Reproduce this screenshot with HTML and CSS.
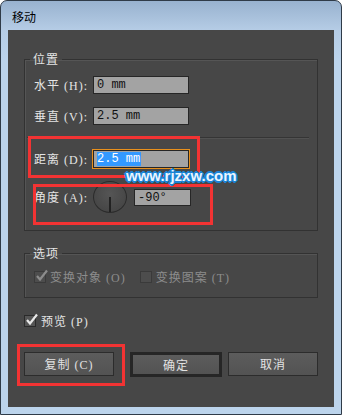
FILE: index.html
```html
<!DOCTYPE html>
<html lang="zh">

<head>
  <meta charset="UTF-8">
  <meta name="viewport" content="width=device-width, initial-scale=1.0">
  <title>移动</title>
  <link rel="stylesheet" href="styles.css">
</head>

<body>
  <div class="window">
    <div class="titlebar">移动</div>
    <div class="content">
      <fieldset class="group position">
        <legend>位置</legend>
        <div class="row first">
          <span class="label">水平 (H):</span>
          <span class="field">0 mm</span>
        </div>
        <div class="row">
          <span class="label">垂直 (V):</span>
          <span class="field">2.5 mm</span>
        </div>
        <div class="separator"></div>
        <div class="row distance">
          <span class="label">距离 (D):</span>
          <span class="field focused"><span class="selected">2.5 mm</span></span>
        </div>
        <div class="row angle">
          <span class="label">角度 (A):</span>
          <span class="dial"><span class="needle"></span></span>
          <span class="field small">-90°</span>
        </div>
      </fieldset>

      <fieldset class="group options">
        <legend>选项</legend>
        <div class="row checks">
          <span class="check disabled checked">
            <svg width="16" height="14" viewBox="0 0 16 14"><path d="M3 7 L6 10.5 L13 1.5" fill="none" stroke="#8c8c8c" stroke-width="2.2"/></svg>
          </span>
          <span class="check-label">变换对象 (O)</span>
          <span class="check disabled second"></span>
          <span class="check-label">变换图案 (T)</span>
        </div>
      </fieldset>

      <div class="preview">
        <span class="check checked">
          <svg width="16" height="14" viewBox="0 0 16 14"><path d="M3 7 L6 10.5 L13 1.5" fill="none" stroke="#e8e8e8" stroke-width="2.2"/></svg>
        </span>
        <span class="preview-label">预览 (P)</span>
      </div>

      <div class="buttons">
        <button class="btn copy">复制 (C)</button>
        <button class="btn ok">确定</button>
        <button class="btn cancel">取消</button>
      </div>
    </div>

    <!-- annotations laid over the dialog -->
    <div class="mark mark-distance"></div>
    <div class="mark mark-angle"></div>
    <div class="mark mark-copy"></div>
    <div class="watermark">www.rjzxw.com</div>
  </div>
</body>

</html>
```

FILE: styles.css
```css
* {
  box-sizing: border-box;
  margin: 0;
  padding: 0;
}

body {
  background: #ffffff;
  font-family: "Liberation Serif", "Noto Sans CJK SC", serif;
  font-size: 12px;
}

.window {
  position: relative;
  width: 342px;
  height: 415px;
  border: 1px solid #2f3b48;
  border-radius: 7px 7px 0 0;
  background: linear-gradient(#98b2cf 0px, #b6cde6 30px, #bcd4ec 60px);
  padding: 0 7px 7px 7px;
  display: flex;
  flex-direction: column;
}

.titlebar {
  height: 29px;
  line-height: 14px;
  padding: 9px 0 0 4px;
  font-family: "Noto Sans CJK SC", sans-serif;
  color: #000;
}

.content {
  flex: 1;
  background: #474747;
  display: flex;
  flex-direction: column;
}

.group {
  margin: 22px 0 0 16px;
  width: 294px;
  border: 1px solid #323232;
  box-shadow: 1px 1px 0 #555 inset;
  padding: 0 0 17px 0;
  min-width: 0;
}

.group legend {
  margin-left: 5px;
  padding: 0 3px;
  line-height: 14px;
  color: #e4e4e4;
  font-family: "Noto Sans CJK SC", sans-serif;
  letter-spacing: 1px;
}

.row {
  display: flex;
  align-items: center;
  height: 18px;
  margin-top: 13px;
  padding-left: 9px;
}

.row.first {
  margin-top: 10px;
}

.label {
  width: 59px;
  color: #e4e4e4;
  letter-spacing: 1px;
  white-space: nowrap;
}

.field {
  width: 96px;
  height: 18px;
  background: #a3a3a3;
  border: 1px solid #262626;
  color: #111;
  font-family: "Liberation Mono", monospace;
  font-size: 12px;
  line-height: 16px;
  padding-left: 3px;
}

.field.focused {
  outline: 1px solid #e8901c;
  padding-top: 1px;
  line-height: 14px;
}

.selected {
  background: #3399ff;
  color: #fff;
  display: inline-block;
  padding-right: 1px;
}

.field.small {
  width: 57px;
  height: 17px;
  margin-left: 7px;
}

.separator {
  height: 1px;
  background: #353535;
  box-shadow: 0 1px 0 #525252;
  margin: 12px 8px 0 -2px;
  margin-left: 2px;
}

.row.distance {
  margin-top: 12px;
}

.row.angle {
  height: 32px;
  margin-top: 13px;
}

.dial {
  position: relative;
  width: 34px;
  height: 32px;
  border-radius: 50%;
  border: 1px solid #2b2b2b;
  background: radial-gradient(circle at 50% 40%, #555 0%, #474747 70%);
}

.needle {
  position: absolute;
  left: 15px;
  top: 15px;
  width: 2px;
  height: 15px;
  background: #222;
}

.group.options {
  margin-top: 15px;
  padding-bottom: 13px;
}

.row.checks {
  height: 14px;
  margin-top: 10px;
}

.check {
  position: relative;
  width: 12px;
  height: 12px;
  border: 1px solid #2a2a2a;
  background: #555;
  flex-shrink: 0;
}

.check svg {
  position: absolute;
  left: -1px;
  top: -3px;
}

.check.disabled {
  background: #4d4d4d;
  border-color: #3a3a3a;
}

.check.second {
  margin-left: 14px;
}

.check-label {
  color: #8c8c8c;
  letter-spacing: 1px;
  margin-left: 4px;
  white-space: nowrap;
}

.preview {
  display: flex;
  align-items: center;
  height: 14px;
  margin: 16px 0 0 16px;
}

.preview-label {
  color: #e4e4e4;
  letter-spacing: 1px;
  margin-left: 5px;
}

.buttons {
  display: flex;
  margin-top: 24px;
}

.btn {
  height: 24px;
  width: 90px;
  background: linear-gradient(#5c5c5c, #535353);
  border: 1px solid #2c2c2c;
  color: #e2e2e2;
  font-family: "Liberation Serif", "Noto Sans CJK SC", serif;
  font-size: 12px;
  letter-spacing: 1px;
}

.btn.copy {
  margin-left: 16px;
}

.btn.ok {
  margin-left: 16px;
  width: 92px;
  height: 25px;
  border: 3px solid #262626;
}

.btn.cancel {
  margin-left: 6px;
}

.mark {
  position: absolute;
  border: 3px solid #f23333;
}

.mark-distance {
  left: 27px;
  top: 135px;
  width: 172px;
  height: 42px;
}

.mark-angle {
  left: 32px;
  top: 183px;
  width: 180px;
  height: 41px;
}

.mark-copy {
  left: 16px;
  top: 343px;
  width: 108px;
  height: 42px;
}

.watermark {
  position: absolute;
  left: 125px;
  top: 166px;
  font-family: "Liberation Sans", sans-serif;
  font-weight: bold;
  font-size: 15px;
  line-height: 18px;
  color: #eaf5ff;
  text-shadow:
    1px 0 0 #1a84d6, -1px 0 0 #1a84d6, 0 1px 0 #1a84d6, 0 -1px 0 #1a84d6,
    1px 1px 0 #1a84d6, -1px -1px 0 #1a84d6, 1px -1px 0 #1a84d6, -1px 1px 0 #1a84d6,
    2px 0 0 #1a84d6, -2px 0 0 #1a84d6, 0 2px 0 #1a84d6, 0 -2px 0 #1a84d6;
}
```
